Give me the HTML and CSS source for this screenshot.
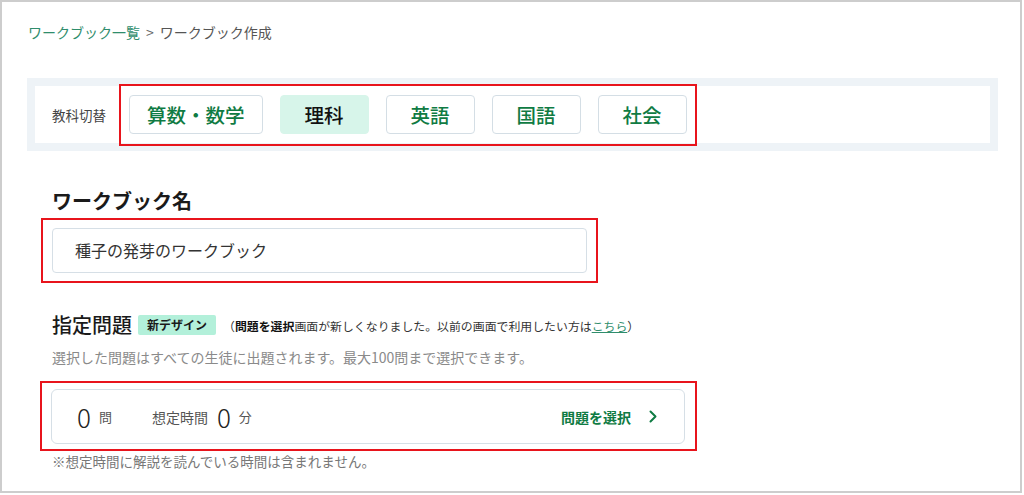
FILE: index.html
```html
<!DOCTYPE html>
<html lang="ja">
<head>
<meta charset="utf-8">
<title>ワークブック作成</title>
<link rel="stylesheet" href="styles.css">
</head>
<body>
<div class="page">
  <nav class="breadcrumb">
    <a class="crumb-link" href="#">ワークブック一覧</a><span class="crumb-sep">&gt;</span><span class="crumb-current">ワークブック作成</span>
  </nav>

  <div class="subject-panel">
    <div class="subject-bar">
      <span class="subject-label">教科切替</span>
      <div class="annot annot-subjects">
        <button class="subject-btn">算数・数学</button>
        <button class="subject-btn is-active">理科</button>
        <button class="subject-btn">英語</button>
        <button class="subject-btn">国語</button>
        <button class="subject-btn">社会</button>
      </div>
    </div>
  </div>

  <section class="form">
    <h2 class="field-title">ワークブック名</h2>
    <div class="annot annot-name">
      <div class="text-input">種子の発芽のワークブック</div>
    </div>

    <div class="problem-head">
      <h2 class="field-title inline">指定問題</h2>
      <span class="badge">新デザイン</span>
      <span class="notice">（<b>問題を選択</b>画面が新しくなりました。以前の画面で利用したい方は<a class="notice-link" href="#">こちら</a>）</span>
    </div>
    <p class="desc">選択した問題はすべての生徒に出題されます。最大100問まで選択できます。</p>

    <div class="annot annot-card">
      <div class="select-card">
        <span class="big-num">0</span><span class="unit">問</span>
        <span class="est-label">想定時間</span><span class="big-num num-gap">0</span><span class="unit">分</span>
        <a class="select-link" href="#">問題を選択
          <svg class="chev" width="8" height="13" viewBox="0 0 8 13"><path d="M1.5 1.5 L6.5 6.5 L1.5 11.5" fill="none" stroke="#0f7b43" stroke-width="2" stroke-linecap="round" stroke-linejoin="round"/></svg>
        </a>
      </div>
    </div>
    <p class="footnote">※想定時間に解説を読んでいる時間は含まれません。</p>
  </section>
</div>
</body>
</html>
```

FILE: styles.css
```css
* { box-sizing: border-box; }

html, body {
  margin: 0;
  padding: 0;
  background: #fff;
}

body {
  font-family: "Noto Sans CJK JP", "Noto Sans", sans-serif;
  color: #222;
}

.page {
  width: 1022px;
  height: 493px;
  border: 2px solid #cdcdcd;
  padding: 20px 22px 0 25px;
  overflow: hidden;
}

/* breadcrumb */
.breadcrumb {
  margin-left: 1px;
  font-size: 14px;
  line-height: 20px;
  height: 20px;
  white-space: nowrap;
}
.crumb-link {
  color: #2f8d6c;
  text-decoration: none;
}
.crumb-sep {
  color: #666;
  margin: 0 6px;
}
.crumb-current {
  color: #555;
}

/* subject switcher */
.subject-panel {
  margin-top: 36px;
  background: #eef3f7;
  padding: 8px;
}
.subject-bar {
  background: #fff;
  height: 57px;
  display: flex;
  align-items: center;
  padding-left: 17px;
}
.subject-label {
  font-size: 13.5px;
  color: #444;
  line-height: 20px;
}

.annot {
  border: 2px solid #e8141c;
}

.annot-subjects {
  margin-left: 13px;
  display: flex;
  gap: 17px;
  padding: 9px 8px 10px 8px;
}

.subject-btn {
  font-family: inherit;
  min-width: 89px;
  height: 39px;
  padding: 0 17px;
  border: 1px solid #d4dee5;
  border-radius: 4px;
  background: #fff;
  color: #0f7b43;
  font-size: 19.5px;
  font-weight: 500;
  line-height: 37px;
  cursor: pointer;
}
.subject-btn.is-active {
  background: #d7f5ea;
  border-color: #d7f5ea;
  color: #111;
}

/* form */
.form {
  padding-left: 25px;
}

.field-title {
  margin: 36px 0 0 0;
  font-size: 20px;
  font-weight: 700;
  line-height: 28px;
  color: #1a1a1a;
}
.field-title.inline {
  margin: 0;
  font-weight: 500;
}

.annot-name {
  margin: 3px 0 0 -11px;
  width: 557px;
  padding: 8px 9px;
}
.text-input {
  height: 45px;
  border: 1px solid #d6dfe6;
  border-radius: 4px;
  padding-left: 22px;
  font-size: 16px;
  line-height: 43px;
  color: #333;
}

.problem-head {
  margin-top: 28px;
  display: flex;
  align-items: center;
  height: 28px;
  white-space: nowrap;
}
.badge {
  margin-left: 6px;
  background: #b3f0da;
  color: #1a1a1a;
  font-size: 12px;
  font-weight: 700;
  line-height: 20px;
  height: 20px;
  padding: 0 9px;
  border-radius: 2px;
}
.notice {
  margin-left: 7px;
  font-size: 11.9px;
  color: #333;
}
.notice b {
  font-weight: 700;
  color: #111;
}
.notice-link {
  color: #2f8d6c;
  text-decoration: underline;
}

.desc {
  margin: 8px 0 0 0;
  font-size: 14px;
  line-height: 20px;
  color: #8a8a8a;
}

.annot-card {
  margin: 14px 0 0 -12px;
  width: 657px;
  padding: 6px 10px 5px 9px;
}
.select-card {
  height: 55px;
  border: 1px solid #d6dfe6;
  border-radius: 6px;
  display: flex;
  align-items: center;
  padding: 0 27px 0 25px;
}
.big-num {
  font-size: 26px;
  font-weight: 300;
  color: #222;
  line-height: 1;
}
.num-gap {
  margin-left: 9px;
}
.unit {
  margin-left: 8px;
  font-size: 13px;
  color: #555;
}
.est-label {
  margin-left: 40px;
  font-size: 14px;
  color: #555;
}
.select-link {
  margin-left: auto;
  display: flex;
  align-items: center;
  gap: 18px;
  color: #0f7b43;
  font-size: 14px;
  font-weight: 700;
  text-decoration: none;
}

.footnote {
  margin: 0;
  font-size: 13.5px;
  line-height: 20px;
  color: #777;
}
```
